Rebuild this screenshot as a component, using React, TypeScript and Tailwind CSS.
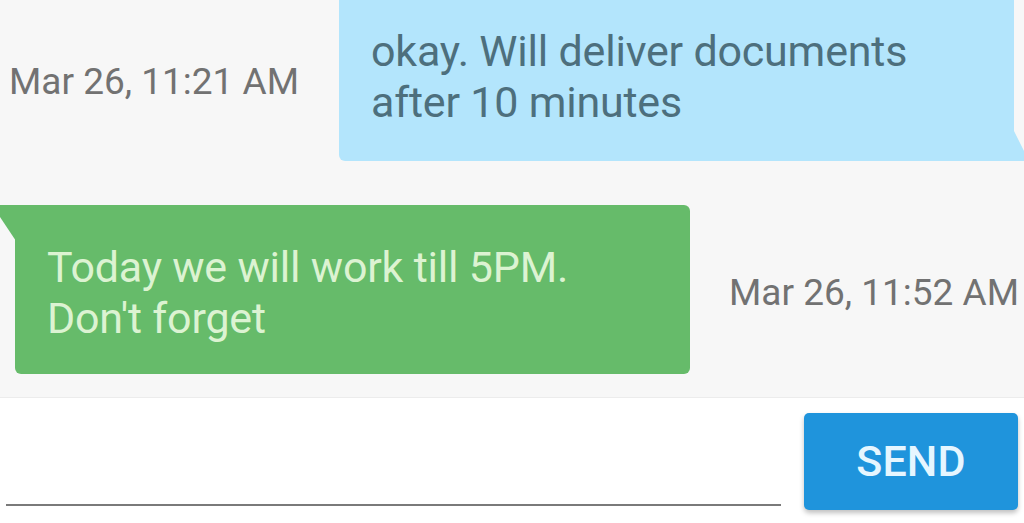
import React from "react";

const font = { fontFamily: "Roboto, 'Noto Sans', sans-serif" };

function Stamp({ text }: { text: string }) {
  return <span className="text-[37px] leading-none text-[#727272] whitespace-nowrap">{text}</span>;
}

export default function App() {
  return (
    <div className="w-[1024px] h-[523px] overflow-hidden bg-[#f7f7f7] flex flex-col" style={font}>
      {/* messages */}
      <div className="flex-1 flex flex-col">
        {/* outgoing */}
        <div className="flex items-center h-[161px]">
          <div className="pl-[9px] pt-[2px]">
            <Stamp text="Mar 26, 11:21 AM" />
          </div>
          <div className="relative ml-auto mr-[10px] w-[675px] h-full bg-[#b3e5fc] rounded-bl-[6px] pl-[32px] pb-[8px] flex flex-col justify-center">
            <p className="text-[43px] leading-[51px] text-[#4d6f7d] tracking-[-0.2px]">
              okay. Will deliver documents
              <br />
              after 10 minutes
            </p>
            <svg className="absolute -right-[10px] bottom-0" width="11" height="32" viewBox="0 0 11 32">
              <path d="M0 0 L11 22 L11 32 L0 32 Z" fill="#b3e5fc" />
            </svg>
          </div>
        </div>

        {/* incoming */}
        <div className="flex items-center mt-[44px] h-[169px]">
          <div className="relative ml-[15px] w-[675px] h-full bg-[#66bb6a] rounded-r-[6px] rounded-bl-[6px] pl-[32px] pt-[6px] flex flex-col justify-center">
            <svg className="absolute -left-[15px] top-0" width="16" height="36" viewBox="0 0 16 36">
              <path d="M0 0 L16 0 L16 36 L0 12 Z" fill="#66bb6a" />
            </svg>
            <p className="text-[43px] leading-[51px] text-[#dcf3d2] tracking-[-0.2px]">
              Today we will work till 5PM.
              <br />
              Don't forget
            </p>
          </div>
          <div className="ml-auto pr-[5px] pt-[6px]">
            <Stamp text="Mar 26, 11:52 AM" />
          </div>
        </div>
      </div>

      {/* input bar */}
      <div className="h-[126px] bg-white border-t border-[#ececec] flex items-start pt-[15px] px-[6px]">
        <div className="w-[775px] h-[93px] border-b-2 border-[#7a7a7a]" />
        <button className="ml-[23px] w-[214px] h-[97px] rounded-[5px] bg-[#1f94dc] shadow-[0_3px_5px_rgba(0,0,0,0.25)] text-[#e6f6ff] text-[43px] font-medium tracking-[0.2px]">
          SEND
        </button>
      </div>
    </div>
  );
}
